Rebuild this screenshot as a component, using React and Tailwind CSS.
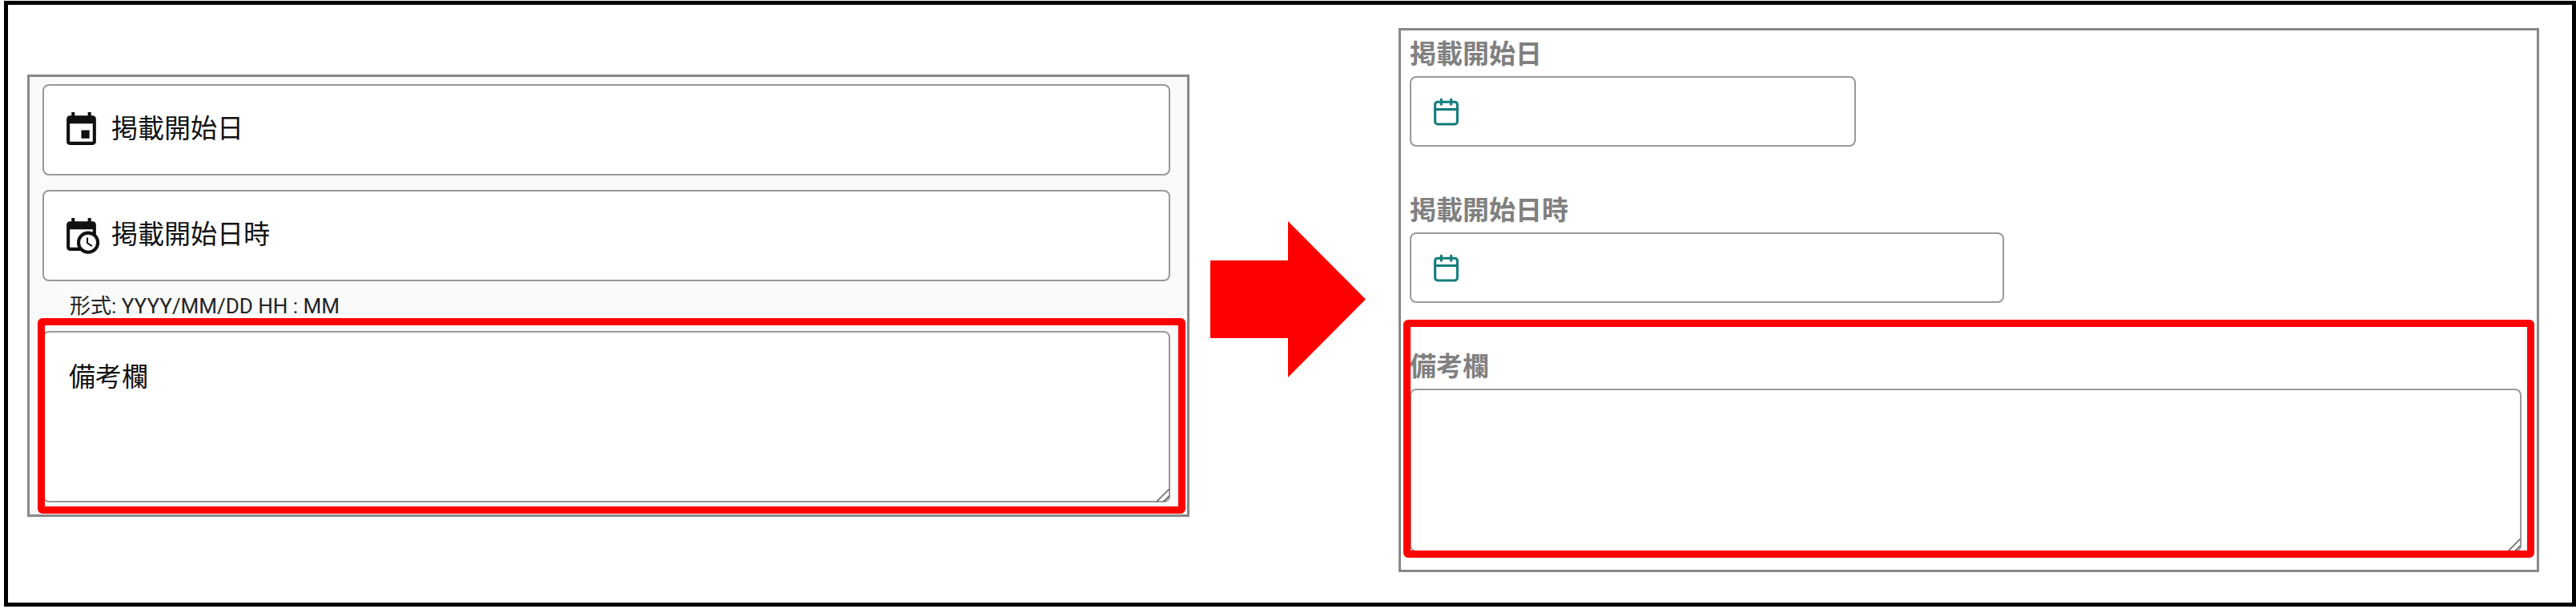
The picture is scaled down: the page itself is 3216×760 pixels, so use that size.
import React from 'react'
import { MdEvent } from 'react-icons/md'
import { Calendar } from 'lucide-react'

const EventClockIcon = () => (
    <svg viewBox="0 0 24 24" className="w-[49px] h-[49px] shrink-0" fill="currentColor">
        <path d="M16 1v2H8V1H6v2H5c-1.11 0-1.99.9-1.99 2L3 19c0 1.1.89 2 2 2h14c1.1 0 2-.9 2-2V5c0-1.1-.9-2-2-2h-1V1h-2zm3 18H5V8h14v11z" />
        <circle cx="16.2" cy="16" r="6.9" />
        <circle cx="16.2" cy="16" r="4.9" fill="#fff" />
        <path d="M15.7 13v3.3l2.8 1.9" fill="none" stroke="currentColor" strokeWidth="1" />
    </svg>
)

const ResizeHandle = () => (
    <svg viewBox="0 0 17 17" className="absolute right-[1px] bottom-[1px] w-[17px] h-[17px] text-[#555555]" fill="none" stroke="currentColor" strokeWidth="1.5">
        <path d="M1 17 16.5 1.5" />
        <path d="M9.5 17 16.5 10" />
    </svg>
)

const LeftField = ({ icon, label }) => (
    <div className="flex items-center gap-[13px] h-[114px] w-[1408px] pl-[22px] bg-white border-2 border-[#999999] rounded-lg text-[33px] text-[#111111]">
        {icon}
        <span className="-mt-[2px]">{label}</span>
    </div>
)

const RightField = ({ label, width, className }) => (
    <div className={className}>
        <label className="block h-[44px] leading-[44px] mb-[5px] text-[33px] font-bold text-[#808080]">{label}</label>
        <div className={`${width} h-[88px] flex items-center pl-[25px] bg-white border-2 border-[#999999] rounded-lg`}>
            <Calendar size={37} strokeWidth={2} className="text-[#137c7c]" />
        </div>
    </div>
)

const App = () => {
    return (
        <div className="w-[3216px] h-[760px] pt-[1px] pl-[5px] bg-white font-['Roboto','Noto_Sans_CJK_JP',sans-serif]">
            <div className="w-[3211px] h-[756px] flex items-start border-[5px] border-black">
                {/* before */}
                <div className="relative w-[1451px] h-[552px] mt-[87px] ml-[24px] pt-[9px] pl-[16px] border-[3px] border-[#888888] bg-[#fafafa]">
                    <LeftField icon={<MdEvent className="w-[49px] h-[49px] shrink-0" />} label="掲載開始日" />
                    <div className="mt-[18px]">
                        <LeftField icon={<EventClockIcon />} label="掲載開始日時" />
                    </div>
                    <p className="h-[62px] pt-[15px] pl-[34px] text-[26px] leading-[32px] text-[#222222]">形式: YYYY/MM/DD HH : MM</p>
                    <div className="relative w-[1408px]">
                        <textarea className="block w-full h-[214px] bg-white border-2 border-[#999999] rounded-lg resize-none" />
                        <span className="absolute left-[33px] top-[36px] text-[33px] leading-[44px] text-[#111111]">備考欄</span>
                        <ResizeHandle />
                    </div>
                    <div className="absolute left-[10px] top-[301px] w-[1433px] h-[244px] border-[9px] border-[#ff0000] rounded-md" />
                </div>

                {/* arrow */}
                <svg viewBox="0 0 194 195" className="w-[194px] h-[195px] mt-[270px] ml-[26px] shrink-0">
                    <polygon points="0,49 97,49 97,0 194,97.5 97,195 97,146 0,146" fill="#ff0000" />
                </svg>

                {/* after */}
                <div className="relative w-[1424px] h-[679px] mt-[29px] ml-[41px] pt-[8px] pl-[11px] border-[3px] border-[#888888] bg-white">
                    <RightField label="掲載開始日" width="w-[557px]" />
                    <RightField label="掲載開始日時" width="w-[742px]" className="mt-[58px]" />
                    <div className="mt-[58px]">
                        <label className="block h-[44px] leading-[44px] mb-[5px] text-[33px] font-bold text-[#808080]">備考欄</label>
                        <div className="relative w-[1388px]">
                            <textarea className="block w-full h-[204px] bg-white border-2 border-[#999999] rounded-lg resize-none" />
                            <ResizeHandle />
                        </div>
                    </div>
                    <div className="absolute left-[3px] top-[361px] w-[1412px] h-[297px] border-[9px] border-[#ff0000] rounded-md" />
                </div>
            </div>
        </div>
    )
}

export default App
